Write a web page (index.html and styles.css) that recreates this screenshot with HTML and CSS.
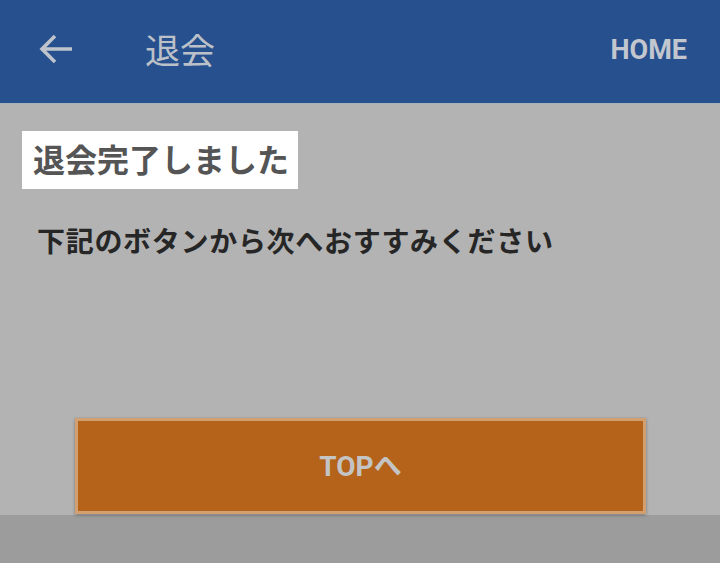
FILE: index.html
```html
<!DOCTYPE html>
<html lang="ja">
<head>
    <meta charset="UTF-8">
    <meta name="viewport" content="width=device-width, initial-scale=1.0">
    <title>退会</title>
    <link rel="stylesheet" href="styles.css">
</head>
<body>
    <header class="appbar">
        <a class="back" href="#" aria-label="戻る">
            <svg width="34" height="32" viewBox="0 0 34 32">
                <path d="M33 16H4M16 3L3 16l13 13" fill="none" stroke="#bfc3cb" stroke-width="3.6"/>
            </svg>
        </a>
        <h1 class="title">退会</h1>
        <a class="home" href="#">HOME</a>
    </header>

    <main class="content">
        <h2 class="done">退会完了しました</h2>
        <p class="lead">下記のボタンから次へおすすみください</p>
        <button class="top-btn">TOPへ</button>
    </main>

    <div class="bottom"></div>
</body>
</html>
```

FILE: styles.css
```css
body {
    margin: 0;
    font-family: Roboto, "Noto Sans CJK JP", sans-serif;
    background-color: #9c9c9c;
    height: 563px;
    overflow: hidden;
}
.appbar {
    height: 103px;
    background-color: #27518e;
    display: flex;
    align-items: center;
    padding: 0 33px 0 39px;
    box-sizing: border-box;
}
.back {
    display: flex;
    margin-top: -6px;
}
.title {
    margin: -7px 0 0 72px;
    font-size: 35px;
    font-weight: 400;
    color: #bcc0c8;
    flex: 1;
}
.home {
    color: #c2c6ce;
    text-decoration: none;
    font-weight: 700;
    font-size: 27px;
    margin-top: -4px;
}
.content {
    height: 412px;
    box-sizing: border-box;
    background-color: #b3b3b3;
    border-top: 1px solid #a9b0ba;
    padding: 27px 22px 1px;
    display: flex;
    flex-direction: column;
    align-items: flex-start;
}
.done {
    margin: 0;
    background: white;
    color: #555;
    font-size: 32px;
    font-weight: 700;
    height: 58px;
    line-height: 60px;
    padding: 0 9px 0 11px;
}
.lead {
    margin: 31px 0 0 15px;
    font-size: 28px;
    font-weight: 700;
    color: #262626;
    letter-spacing: 0.7px;
}
.top-btn {
    margin: auto 0 0 53px;
    width: 571px;
    height: 96px;
    padding: 0 0 5px;
    background-color: #b5631a;
    border: 3px solid #d2a070;
    box-shadow: 0 1px 3px rgba(0, 0, 0, 0.35);
    color: #c4c4c4;
    font-family: Roboto, "Noto Sans CJK JP", sans-serif;
    font-size: 28px;
    font-weight: 700;
    cursor: pointer;
}
.bottom {
    height: 48px;
}
```
